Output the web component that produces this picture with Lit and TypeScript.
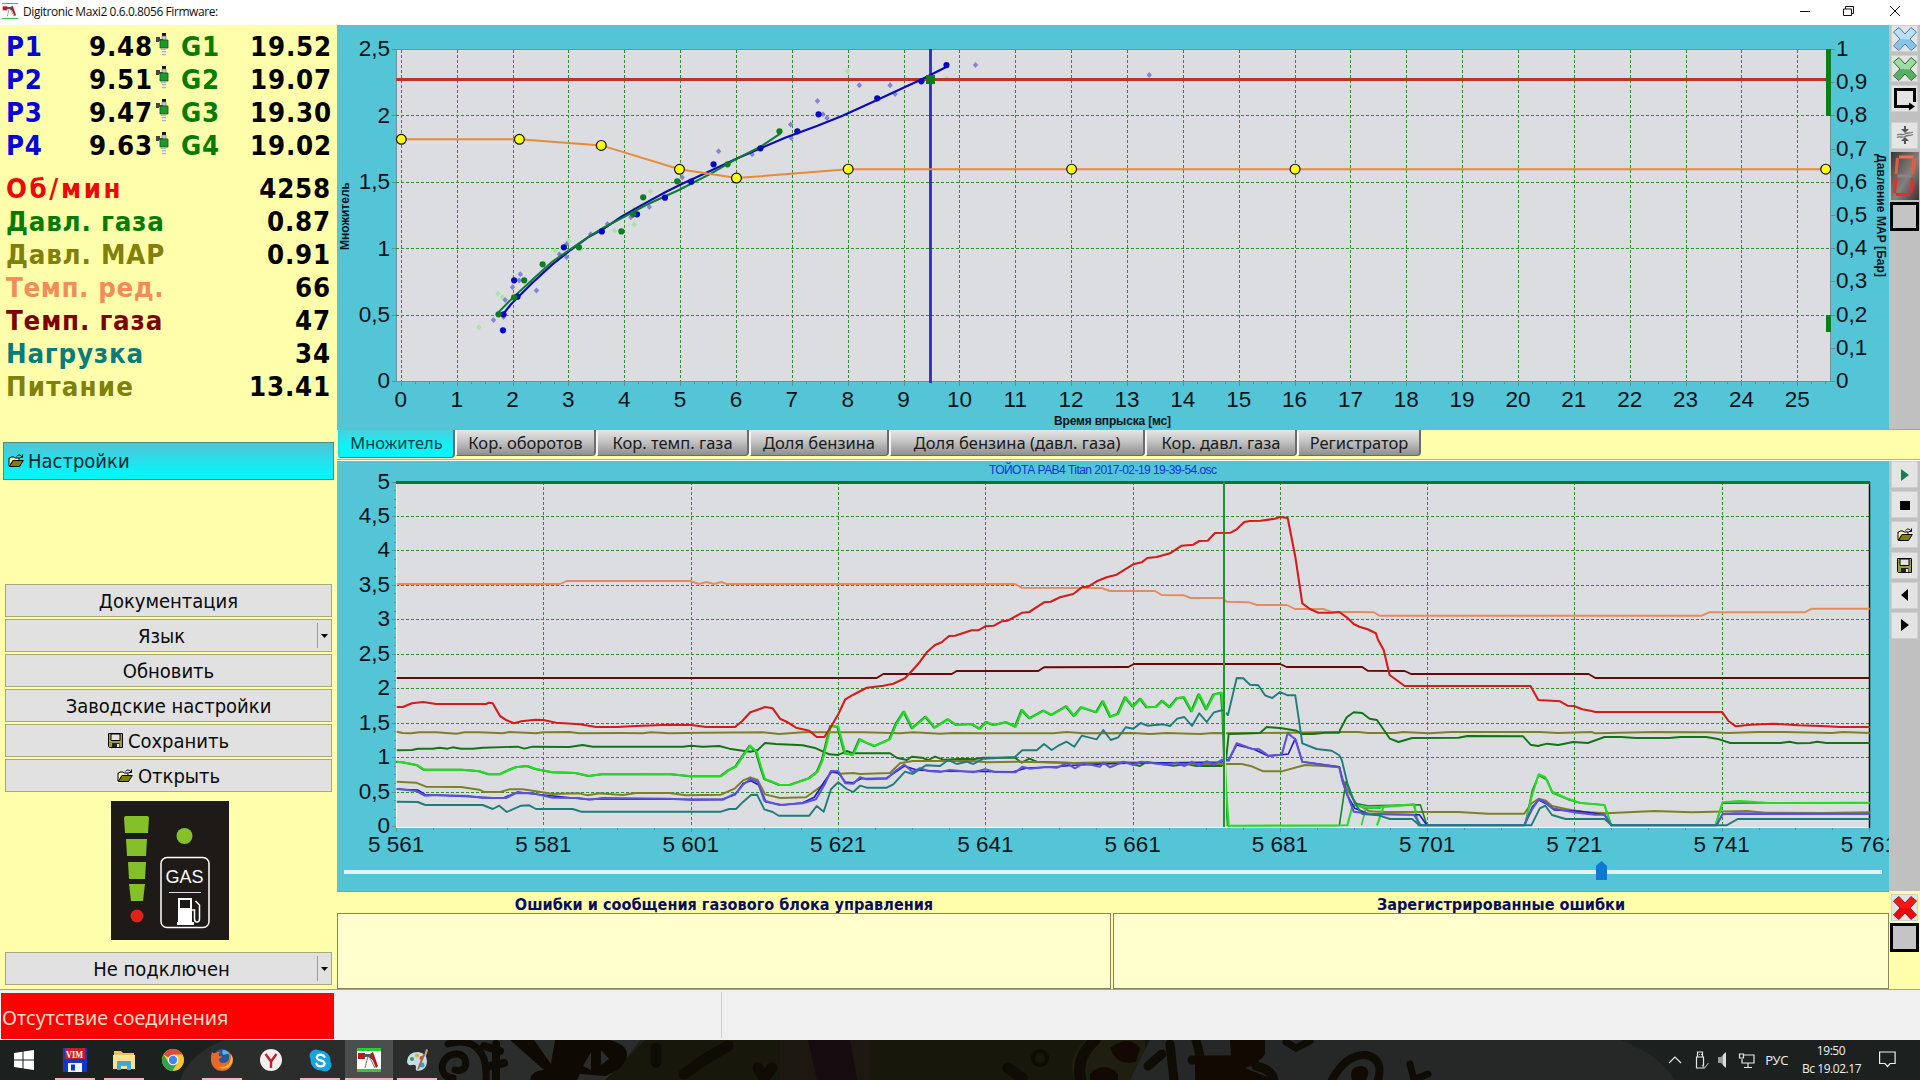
import { LitElement, html, svg, css, nothing } from "lit";
import { customElement, property } from "lit/decorators.js";
import { classMap } from "lit/directives/class-map.js";

type Point = [number, number];

const range = (from: number, to: number, step = 1) =>
  Array.from({ length: Math.round((to - from) / step) + 1 }, (_, i) => from + i * step);

const comma = (n: number) => String(Math.round(n * 10) / 10).replace(".", ",");

/* ---------- icons ---------- */

const folderIcon = html`<svg width="16" height="14" viewBox="0 0 16 14">
  <path d="M1 12V4h1l1-1h3l1 1h4v2.5H5L1.5 12z" fill="#ffff9c" stroke="#000" stroke-width="1" />
  <path d="M1.5 12.5 5 6.5h10.3l-3.8 6z" fill="#808000" stroke="#000" stroke-width="1" />
  <path d="M8.500 2.500C10 .5 12.500 .5 14 3M14.500 .5v3h-3" fill="none" stroke="#000" stroke-width="1" />
</svg>`;

const floppyIcon = html`<svg width="15" height="15" viewBox="0 0 15 15">
  <path d="M.5.500h14v14h-13l-1-1z" fill="#9c9c4a" stroke="#000" />
  <path d="M3 1h9v6.500H3z" fill="#e4e4dc" stroke="#000" />
  <path d="M4 10h7.500v4.500H4z" fill="#222" />
  <path d="M9 11h2v3H9z" fill="#e4e4dc" />
</svg>`;

const injectorIcon = html`<svg width="13" height="23" viewBox="0 0 13 23">
  <path d="M6 0h4v3H6z" fill="#111" />
  <path d="M6 3h4v4H6z" fill="#c8c8c8" stroke="#777" stroke-width=".6" />
  <path d="M0 4h4v2h3v2H3v1H0z" fill="#444" />
  <path d="M4 7h8v8H4z" fill="#1a9a2c" stroke="#0d5a18" stroke-width=".8" />
  <path d="M5 15.500h5v1.500H5zM6 18h4v1.500H6zM6 21h4v1.200H6z" fill="#aab4b8" />
  <path d="M6 17h4v1H6zM6.500 19.500h3V21h-3z" fill="#eee" />
</svg>`;

const crossIcon = (fill: string, shade: string, edge: string) => html`<svg
  width="26"
  height="26"
  viewBox="0 0 26 26">
  <path
    d="M1.500 6 7 1.500 13 8l6-6.500L24.500 6 18 13l6.500 7-5.500 4.500-6-6.500-6 6.500L1.500 20 8 13z"
    fill="${fill}"
    stroke="${edge}" />
  <path d="M8 13 2.500 20 7 24l6-6.500 6 6.500 5-4-6-6.500z" fill="${shade}" opacity=".6" />
</svg>`;

const cycleIcon = html`<svg width="26" height="26" viewBox="0 0 26 26">
  <path d="M22.500 16V3.500h-19v17H18" fill="none" stroke="#000" stroke-width="3" />
  <path d="M17 16.500 23 20.500l-6 4z" fill="#000" />
</svg>`;

const squeezeIcon = html`<svg width="20" height="20" viewBox="0 0 20 20">
  <path d="M10 1v4M10 19v-4" stroke="#555" stroke-width="2" />
  <path d="M6 4h8l-4 4zM6 16h8l-4-4z" fill="#555" />
  <path
    d="M2 10c3-2 5 1 8-1s4 0 8-2M2 12.500c3-2 5 1 8-1s4 0 8-2"
    fill="none"
    stroke="#777"
    stroke-width="1.300" />
</svg>`;

const digitIcon = html`<svg width="28" height="48" viewBox="0 0 28 48">
  <defs>
    <linearGradient id="d" x1="0" y1="0" x2="1" y2="1">
      <stop offset="0" stop-color="#3c3433" />
      <stop offset=".55" stop-color="#85807e" />
      <stop offset="1" stop-color="#3a3231" />
    </linearGradient>
  </defs>
  <path d="M0 0h28v48H0z" fill="url(#d)" />
  <g fill="none" stroke-width="3">
    <path d="M8 5h14.500" stroke="#f0704c" />
    <path d="M6.500 6 5 22M23 6l-1.500 16" stroke="#e85a3e" />
    <path d="M6.500 24h14" stroke="#8e8583" />
    <path d="M5 26 3.500 41M21.500 26 20 41" stroke="#e0302a" />
    <path d="M5 42.500h14" stroke="#ee2a22" />
  </g>
</svg>`;

const glyph = (d: string, fill = "#000") => html`<svg width="10" height="12" viewBox="0 0 10 12">
  <path d="${d}" fill="${fill}" />
</svg>`;

const logoIcon = (size: number, bars: boolean) => html`<svg
  width="${size}"
  height="${size}"
  viewBox="0 0 24 24">
  <path d="M0 0h24v24H0z" fill="#fff" />
  <path d="M0 0h24v${bars ? 3 : 1.5}H0zM0 ${bars ? 21 : 22.5}h24V24H0z" fill="#2ccc34" />
  <path d="M1 5h7v6H1z" fill="#c01818" />
  <path d="M7 6h6l5 4-2 2-5-3H7z" fill="#555" />
  <path d="m13 6 3-2 5 14-2 2z" fill="#b81818" />
  <path d="m11 8-3 12M13 10l5 10" stroke="#777" stroke-width="1" />
</svg>`;

/* ---------- multiplier chart data ---------- */

const TX = (v: number) => 64.3 + v * 55.86;
const TY = (v: number) => 356.5 - v * 132.8;

const petrolCurve: Point[] = [
  [1.83, 0.51], [1.96, 0.58], [2.08, 0.63], [2.34, 0.74], [2.7, 0.88], [3.03, 0.99], [3.36, 1.09],
  [3.62, 1.15], [3.94, 1.24], [4.31, 1.33], [4.75, 1.43], [5.04, 1.49], [5.48, 1.575], [5.99, 1.675],
  [6.43, 1.756], [6.87, 1.836], [7.45, 1.926], [7.89, 2.0], [8.47, 2.11], [8.98, 2.21], [9.31, 2.275],
  [9.79, 2.376],
];

const gasCurve: Point[] = [
  [1.72, 0.513], [1.97, 0.62], [2.34, 0.764], [2.7, 0.902], [3.07, 1.008], [3.36, 1.09], [3.62, 1.158],
  [3.94, 1.229], [4.38, 1.329], [4.97, 1.442], [5.55, 1.567], [5.99, 1.675], [6.43, 1.768], [6.79, 1.869],
];

const petrolDots: Point[] = [
  [1.82, 0.385], [1.83, 0.506], [2.02, 0.762], [2.08, 0.639], [2.91, 1.01], [3.59, 1.13], [4.22, 1.259],
  [4.72, 1.384], [5.19, 1.505], [5.59, 1.635], [6.43, 1.756], [7.09, 1.884], [7.47, 2.012], [8.52, 2.132],
  [9.31, 2.26], [9.76, 2.383],
];

const gasDots: Point[] = [
  [1.74, 0.506], [2.02, 0.634], [2.2, 0.762], [2.53, 0.882], [3.18, 1.01], [3.94, 1.13], [4.15, 1.259],
  [4.33, 1.387], [4.94, 1.507], [5.84, 1.635], [6.77, 1.884],
];

const petrolFaint: Point[] = [
  [1.65, 0.463], [1.83, 0.485], [1.86, 0.614], [1.99, 0.709], [2.13, 0.807], [2.11, 0.76], [2.42, 0.686],
  [2.83, 0.958], [2.96, 0.935], [2.96, 1.035], [3.39, 1.108], [3.69, 1.186], [4.11, 1.236], [4.44, 1.314],
  [5.03, 1.537], [5.68, 1.733], [6.28, 1.711], [6.98, 1.834], [6.97, 1.936], [7.45, 2.112], [7.55, 2.012],
  [7.62, 1.984], [8.2, 2.23], [8.75, 2.23], [8.84, 2.165], [10.28, 2.383], [13.39, 2.308],
];

const gasFaint: Point[] = [
  [1.39, 0.408], [1.81, 0.634], [1.73, 0.66], [2.75, 0.985], [3.0, 1.058], [3.21, 1.0], [3.82, 1.136],
  [4.17, 1.183], [4.17, 1.3], [4.46, 1.432], [5.95, 1.66], [7.99, 2.336], [9.76, 2.283],
];

const multiplier: Point[] = [
  [0, 1.824], [2.114, 1.824], [3.58, 1.778], [4.98, 1.598], [6, 1.532], [8, 1.599], [12, 1.599],
  [16, 1.599], [25.5, 1.599],
];

const toPoints = (points: Point[]) =>
  points.map(([x, y]) => `${TX(x).toFixed(1)},${TY(y).toFixed(1)}`).join(" ");

@customElement("multiplier-chart")
export class MultiplierChart extends LitElement {
  static styles = css`
    :host {
      display: block;
      background: #54c5d6;
    }

    svg {
      display: block;
    }

    text {
      font-family: "Liberation Sans", Arial, sans-serif;
      font-size: 22.5px;
      fill: #06141a;
    }

    .title {
      font-size: 12px;
      font-weight: bold;
    }

    .grid {
      stroke: #2f8f2f;
      stroke-dasharray: 3 2;
      shape-rendering: crispEdges;
    }

    .tick {
      stroke: #5f8f93;
      shape-rendering: crispEdges;
    }
  `;

  render() {
    return html`<svg width="1552" height="404" viewBox="0 0 1552 404">
      <rect x="59.5" y="24.5" width="1434" height="332" fill="#dcdde1" stroke="#6f9294" />
      ${range(0, 25).map((v) => svg`<line class="grid" x1=${TX(v)} x2=${TX(v)} y1="25" y2="356" />`)}
      ${[0.5, 1, 1.5, 2].map((v) => svg`<line class="grid" x1="59" x2="1493" y1=${TY(v)} y2=${TY(v)} />`)}
      ${range(0, 25.5, 0.25).map(
        (v) => svg`<line class="tick" x1=${TX(v)} x2=${TX(v)} y1="357" y2=${v % 1 ? 359 : 361} />`
      )}
      ${range(0, 2.5, 0.5).map((v) => svg`<line class="tick" x1="55" x2="59" y1=${TY(v)} y2=${TY(v)} />`)}
      ${range(0, 10).map(
        (v) => svg`<line class="tick" x1="1494" x2="1498" y1=${TY(v / 4)} y2=${TY(v / 4)} />`
      )}
      <path d="M1489 24h5v67h-5zM1489 290h5v17h-5z" fill="#0a7f1c" />

      ${gasFaint.map(([x, y]) => this.diamond(x, y, "#a4e6a4"))}
      ${petrolFaint.map(([x, y]) => this.diamond(x, y, "#8484d6"))}
      <path d="M59 54.500H1489" stroke="#c2302c" stroke-width="3" />
      <path d="M593.500 24V358" stroke="#2c2cc4" stroke-width="2.800" />
      <polyline points=${toPoints(petrolCurve)} fill="none" stroke="#0c0cb0" stroke-width="2.200" />
      <polyline points=${toPoints(gasCurve)} fill="none" stroke="#107c38" stroke-width="2" />
      ${petrolDots.map(([x, y]) => svg`<circle cx=${TX(x)} cy=${TY(y)} r="3.100" fill="#0808c0" />`)}
      ${gasDots.map(([x, y]) => svg`<circle cx=${TX(x)} cy=${TY(y)} r="3.100" fill="#0c7d20" />`)}
      <path d="M589 50h9v9h-9z" fill="#087f10" />
      <polyline points=${toPoints(multiplier)} fill="none" stroke="#e68c38" stroke-width="2" />
      ${multiplier.map(
        ([x, y]) =>
          svg`<circle cx=${TX(x)} cy=${TY(y)} r="4.900" fill="#ffff10" stroke="#111" stroke-width="1.200" />`
      )}

      ${range(0, 2.5, 0.5).map(
        (v) => svg`<text x="53" y=${TY(v) + 6.8} text-anchor="end">${comma(v)}</text>`
      )}
      ${range(0, 10).map((v) => svg`<text x="1499" y=${TY(v / 4) + 6.5}>${comma(v / 10)}</text>`)}
      ${range(0, 25).map((v) => svg`<text x=${TX(v) - 0.5} y="381.700" text-anchor="middle">${v}</text>`)}
      <text class="title" x="717" y="399.500" textLength="117">Время впрыска [мс]</text>
      <text class="title" transform="translate(12 225) rotate(-90)" textLength="68">Множитель</text>
      <text class="title" transform="translate(1540 129) rotate(90)" textLength="123">Давление MAP [Бар]</text>
    </svg>`;
  }

  diamond(x: number, y: number, fill: string) {
    return svg`<path transform="translate(${TX(x)} ${TY(y)})" d="M0-3 2.700 0 0 3-2.700 0z" fill=${fill} />`;
  }
}

/* ---------- oscilloscope ---------- */

// The log comes in three pages, each with its own origin and resolution.
const PAGES = [
  { x: -1, y: -1, sx: 3, sy: 3 },
  { x: 503, y: -1, sx: 3, sy: 3 },
  { x: 1003, y: 179, sx: 2.703, sy: 3 },
];

interface Trace {
  color: string;
  width?: number;
  shift?: number;
  pages: string[];
}

const tracePoints = ({ pages, shift = 0 }: Trace) =>
  pages
    .map((page, i) => {
      const { x, y, sx, sy } = PAGES[i];
      return page
        .split(" ")
        .filter(Boolean)
        .map((pair) => {
          const [px, py] = pair.split(",").map(Number);
          return `${(x + shift + px / sx).toFixed(1)},${(y + py / sy).toFixed(1)}`;
        })
        .join(" ");
    })
    .join(" ");

const gasA =
  "182,905 200,907 228,912 245,916 265,929 380,929 432,934 460,943 492,943 520,930 540,922 575,918 600,927 650,937 720,939 760,948 800,943 1000,942 1066,949 1155,949 1180,930 1200,920 1220,890 1243,857 1262,875 1275,920 1287,957 1310,966 1332,975 1365,974 1420,955 1445,935 1460,900 1485,798 1507,800";
const gasB =
  "16,880 40,884 60,838 80,848 105,858 150,838 170,790 193,755 218,805 258,770 285,803 325,778 350,795 395,792 420,806 440,786 462,795 500,787 527,800 547,750 570,775 612,752 635,765 680,739 703,768 725,742 770,757 790,724 812,770 835,762 857,712 880,740 902,716 922,742 950,740 968,722 990,742 1012,715 1033,712 1056,754 1078,703 1100,748 1122,704 1145,698 1150,760 1158,980 1166,1097";

const traces: Trace[] = [
  {
    color: "#7f7f28",
    pages: [
      "182,815 200,819 225,820 250,817 300,817 362,821 385,817 430,817 500,820 520,816 600,820 622,817 700,816 730,820 860,819 920,820 945,817 1000,820 1100,818 1280,817 1330,822 1400,817",
      "0,817 70,817 180,820 220,817 300,821 340,819 436,820 640,820 680,816 730,820 880,819 930,822 980,819 1080,822 1120,819 1200,820 1450,817",
      "0,276 50,276 75,279 150,279 170,276 240,280 300,276 540,276 590,279 680,276 690,280 850,276 1000,277 1050,279 1130,276 1200,276 1330,279 1360,276 1432,279",
    ],
  },
  {
    color: "#e88a60",
    pages: [
      "182,372 672,372 692,363 1062,363 1090,372 1112,366 1134,372 1156,366 1172,372",
      "525,372 545,383 785,384 810,393 945,393 965,405 1032,406 1052,414 1148,414 1160,425 1228,427 1250,435 1340,435 1365,447 1450,447 1475,456",
      "40,-84 92,-83 107,-73 978,-73 998,-83 1257,-83 1275,-94 1432,-94",
    ],
  },
  {
    color: "#6a0808",
    pages: [
      "182,654",
      "110,654 130,642 335,642 350,633 595,633 612,622 865,621 882,612 1320,612 1340,621",
      "60,81 75,92 175,93 192,102 672,102 690,114 1432,114",
    ],
  },
  {
    color: "#127418",
    pages: [
      "182,871 228,870 245,866 290,866 310,863 335,866 350,862 375,866 410,866 440,863 545,860 565,866 590,860 700,861 740,855 770,860 1040,860 1066,857 1100,860 1150,858 1180,866 1220,872 1243,875 1265,870 1287,849 1320,852 1400,856 1440,865 1480,883 1507,885",
      "20,873 40,880 150,880 170,893 200,900 215,890 245,893 265,900 285,890 310,899 370,896 400,898 430,893 525,893 545,908 568,896 590,905 700,909 860,908 900,918 920,906 1000,917 1040,912 1070,918 1145,918 1158,900 1166,822 1260,819 1280,801 1325,805 1370,812 1385,822 1420,822 1455,818 1498,818",
      "0,270 18,232 37,217 60,219 80,236 100,240 120,272 135,296 158,306 195,294 320,293 345,288 495,289 515,314 535,318 560,311 590,315 630,306 670,309 715,291 760,291 800,294 890,294 920,291 990,291 1025,298 1055,309 1190,309 1215,305 1235,310 1270,309 1290,305 1315,309 1432,309",
    ],
  },
  {
    color: "#7f7f28",
    pages: [
      "182,965 240,968 270,980 375,981 430,989 445,996 492,996 520,988 560,988 610,995 650,1002 730,1000 755,1006 790,1000 860,1005 900,999 1000,999 1050,1006 1155,1004 1197,985 1220,962 1243,952 1265,960 1287,1003 1332,1014 1410,1012 1440,990 1460,975 1485,935",
      "0,941 40,939 60,942 150,939 180,910 218,903 400,903 440,907 540,905 700,909 850,907 1000,910 1100,912 1205,912 1235,919 1270,934 1325,934 1395,915 1450,918 1498,922",
      "8,420 20,450 45,492 80,514 120,516 320,516 400,521 498,521 518,490 537,476 555,481 573,498 610,507 655,516 720,520 850,513 950,517 1100,513 1150,518 1300,519 1432,517",
    ],
  },
  {
    color: "#1c8c28",
    shift: -1,
    pages: [gasA, gasB],
  },
  {
    color: "#1c8428",
    width: 1.6,
    pages: [
      "",
      "",
      "-2,557 16,425 40,490 75,497 217,494 235,556 500,556 520,450 537,406 560,420 575,459 620,480 650,489 715,495 733,556 1015,556 1034,490 1200,488 1432,488",
    ],
  },
  {
    color: "#24dc24",
    width: 2.1,
    pages: [gasA, gasB, "20,556 34,495 75,503 115,500 200,494 213,556"],
  },
  { color: "#30c830", width: 1.5, pages: ["", "", "58,556 70,505 110,505"] },
  {
    color: "#24dc24",
    width: 2.1,
    pages: ["", "", "100,556 118,500 200,493 212,556 500,556 518,470 537,403 555,412 573,455 610,474 650,489 715,495 733,556 1015,556 1034,487 1080,483 1160,489 1432,488"],
  },
  {
    color: "#2418c4",
    width: 1.6,
    pages: [
      "182,988 245,990 268,1004 440,1012 500,1015 545,996 600,1003 740,1017 1066,1018 1160,1017 1197,1004 1222,970 1245,962 1268,975 1290,1026 1340,1035 1400,1028 1435,1012 1465,965 1487,935 1507,938",
      "16,966 40,968 62,956 140,954 193,918 230,930 300,934 520,935 560,924 650,920 700,916 790,912 860,910 1145,906 1166,898 1190,855 1240,867 1285,888 1325,884 1345,882 1366,836 1387,905 1498,920",
      "8,430 22,470 40,505 80,523 215,524 235,556 498,556 520,500 537,480 560,493 580,510 650,514 715,524 733,556 1018,556 1034,522 1432,521",
    ],
  },
  {
    color: "#5c54d8",
    width: 2.1,
    pages: [
      "182,986 240,993 268,1007 300,1005 400,1008 440,1014 510,1014 540,999 590,1000 650,1013 730,1014 760,1019 800,1014 1000,1016 1066,1020 1160,1019 1200,1000 1220,975 1243,957 1265,965 1285,1022 1330,1035 1400,1030 1440,1018 1465,975 1485,933 1507,934",
      "16,970 40,971 60,952 80,958 140,956 170,930 193,914 218,936 240,925 265,933 300,936 330,930 400,937 436,928 465,936 527,937 547,920 570,926 620,921 650,923 680,910 705,925 730,910 780,920 790,908 810,922 850,905 880,915 902,905 980,914 1010,908 1033,918 1056,905 1078,918 1100,904 1122,914 1145,900 1166,902 1190,850 1235,866 1258,868 1285,887 1325,884 1343,820 1366,838 1387,905 1450,915 1498,922",
      "6,420 18,460 37,515 80,521 200,524 218,556 498,556 518,510 537,478 555,486 573,505 640,518 690,524 715,524 733,556 1018,556 1034,523 1070,520 1432,521",
    ],
  },
  {
    color: "#207c7c",
    pages: [
      "182,1025 245,1026 268,1035 440,1035 470,1047 490,1037 512,1056 555,1037 580,1036 600,1047 710,1047 735,1055 1155,1055 1180,1047 1200,1047 1222,1025 1245,1005 1263,1004 1285,1048 1310,1056 1328,1067 1420,1067 1442,1038 1463,1055 1485,988 1507,967",
      "20,987 40,996 60,977 80,983 140,983 160,973 195,935 218,942 258,916 300,918 325,900 350,912 380,905 400,912 430,896 525,891 547,871 590,871 612,852 635,870 655,857 680,845 703,860 725,827 770,838 790,810 812,840 835,832 857,802 880,806 902,789 922,797 970,793 990,798 1012,776 1033,771 1056,798 1078,760 1100,786 1122,757 1148,750 1164,765 1190,654 1210,655 1230,674 1255,676 1275,706 1297,714 1320,696 1343,706 1366,706 1387,850 1430,867 1475,872 1498,886",
      "5,360 20,430 40,490 60,522 105,526 135,537 195,537 215,556 517,556 540,505 555,497 573,525 610,537 715,537 735,556 1045,556 1075,537 1432,537",
    ],
  },
  {
    color: "#d41c1c",
    width: 2.1,
    pages: [
      "182,741 200,741 228,730 262,726 300,732 450,732 458,728 470,730 492,768 512,781 534,790 556,784 598,779 622,780 660,788 732,793 780,801 845,801 900,798 1000,794 1066,795 1110,801 1197,801 1218,784 1243,757 1265,749 1287,741 1310,745 1332,776 1355,787 1380,803 1420,812 1442,831 1465,831 1485,800 1507,763",
      "16,718 40,704 80,683 130,677 160,671 195,655 218,630 240,605 262,575 285,555 305,547 327,528 345,527 395,511 415,511 436,499 462,497 485,484 503,482 547,458 568,456 612,427 632,425 660,412 700,402 727,381 745,380 770,364 800,352 830,344 860,325 880,313 905,307 922,294 950,291 990,280 1025,257 1060,254 1078,243 1103,242 1125,219 1172,218 1190,208 1213,186 1230,183 1262,182 1305,176 1320,171 1343,174 1366,290 1387,430 1410,447 1435,458 1475,458 1498,456 1520,472 1541,492 1558,500",
      "75,-32 97,-20 103,0 118,30 134,105 175,138 515,138 536,180 595,184 615,197 632,198 655,208 680,213 690,216 1033,216 1050,243 1070,259 1110,254 1170,251 1240,256 1300,258 1350,261 1432,261",
    ],
  },
];

@customElement("osc-chart")
export class OscChart extends LitElement {
  static styles = css`
    :host {
      display: block;
      background: #54c5d6;
    }

    svg {
      display: block;
    }

    text {
      font-family: "Liberation Sans", Arial, sans-serif;
      font-size: 22.5px;
      fill: #06141a;
    }

    .name {
      font-size: 12px;
      fill: #0a34dc;
    }

    .grid {
      stroke: #2f8f2f;
      stroke-dasharray: 3 2;
      shape-rendering: crispEdges;
    }

    .tick {
      stroke: #5f8f93;
      shape-rendering: crispEdges;
    }
  `;

  render() {
    const x = (v: number) => 59.7 + (v - 5561) * 7.364;
    const y = (v: number) => 365.5 - v * 68.9;

    return html`<svg width="1552" height="430" viewBox="0 0 1552 430">
      <rect x="59" y="21" width="1474" height="345" fill="#dcdde1" />
      ${range(5581, 5741, 20).map((v) => svg`<line class="grid" x1=${x(v)} x2=${x(v)} y1="21" y2="366" />`)}
      ${range(0.5, 4.5, 0.5).map((v) => svg`<line class="grid" x1="59" x2="1533" y1=${y(v)} y2=${y(v)} />`)}
      ${range(5561, 5761, 5).map(
        (v) => svg`<line class="tick" x1=${x(v)} x2=${x(v)} y1="367" y2=${(v - 1) % 20 ? 369 : 371} />`
      )}
      ${range(0, 5, 0.125).map(
        (v) => svg`<line class="tick" x1=${v % 0.5 ? 57 : 55} x2="59" y1=${y(v)} y2=${y(v)} />`
      )}
      <path d="M59.500 21V366.500H1533" fill="none" stroke="#f4fafb" />
      <path d="M1532.500 21V367" stroke="#111" stroke-width="1.500" />
      <path d="M59 21.500H1533" stroke="#0c7a24" stroke-width="3" />
      <path d="M887 365H1003" stroke="#6fe06f" stroke-width="1.500" />
      ${traces.map(
        (t) => svg`<polyline points=${tracePoints(t)} fill="none" stroke=${t.color}
          stroke-width=${t.width ?? 1.9} stroke-linejoin="round" />`
      )}
      <path d="M887 20V366" stroke="#259030" stroke-width="2" />
      <path d="M888.500 250V366" stroke="#b8f4b8" />

      ${range(0, 5, 0.5).map((v) => svg`<text x="53" y=${y(v) + 6.5} text-anchor="end">${comma(v)}</text>`)}
      ${range(5561, 5761, 20).map(
        (v) => svg`<text x=${x(v) - 0.5} y="391" text-anchor="middle">5 ${v - 5000}</text>`
      )}
      <text class="name" x="652" y="13" textLength="228">ТОЙОТА РАВ4 Titan 2017-02-19 19-39-54.osc</text>
      <path d="M7 409h1538v4H7z" fill="#dcf4f7" />
      <path d="M1259 405l5.500-5 5.500 5v14h-11z" fill="#0f78d4" />
    </svg>`;
  }
}

/* ---------- sidebar ---------- */

const injectors = [
  ["1", "9.48", "19.52"],
  ["2", "9.51", "19.07"],
  ["3", "9.47", "19.30"],
  ["4", "9.63", "19.02"],
];

const readings = [
  { label: "Об/мин", value: "4258", kind: "rpm" },
  { label: "Давл. газа", value: "0.87", kind: "gas" },
  { label: "Давл. МАР", value: "0.91", kind: "map" },
  { label: "Темп. ред.", value: "66", kind: "reducer" },
  { label: "Темп. газа", value: "47", kind: "heat" },
  { label: "Нагрузка", value: "34", kind: "load" },
  { label: "Питание", value: "13.41", kind: "supply" },
];

@customElement("side-panel")
export class SidePanel extends LitElement {
  static styles = css`
    :host {
      box-sizing: border-box;
      display: flex;
      flex-direction: column;
      background: #ffffab;
      padding: 5px 5px 4px 5px;
    }

    .readings {
      font: bold 27.4px/33px "DejaVu Sans Condensed", "DejaVu Sans", sans-serif;
      font-stretch: condensed;
      letter-spacing: 0.8px;
      padding: 0 0 0 1px;
    }

    .injector {
      display: grid;
      grid-template-columns: 50px 97px 28px 60px 1fr;
      height: 33px;
    }

    .injector svg {
      margin: 3px 0 0 3px;
    }

    .num {
      text-align: right;
    }

    .reading {
      display: flex;
      justify-content: space-between;
      height: 33px;
      padding-right: 1px;
    }

    .block {
      margin-top: 10px;
    }

    .p { color: #0404d8; }
    .g, .gas { color: #047c04; }
    .rpm { color: #ee0808; letter-spacing: 2.6px; }
    .map { color: #80800c; }
    .reducer { color: #f28c58; letter-spacing: 0.6px; }
    .heat { color: #7a0404; }
    .load { color: #087c7c; }
    .supply { color: #80800c; letter-spacing: 1.2px; }

    .settings {
      box-sizing: border-box;
      display: flex;
      align-items: center;
      gap: 4px;
      width: 331px;
      height: 38px;
      margin: 39px 0 104px -2px;
      padding: 0 4px;
      border: 1px solid #4b8c8c;
      background: linear-gradient(#50c4d6, #08f4fa 85%);
      font: 20px "DejaVu Sans Condensed", "DejaVu Sans", sans-serif;
      font-stretch: condensed;
      color: #102830;
    }

    .button {
      box-sizing: border-box;
      display: flex;
      align-items: stretch;
      height: 33px;
      margin-bottom: 2px;
      border: 1px solid #a9a97c;
      background: #e1e1e1;
      font: 20px/32px "DejaVu Sans Condensed", "DejaVu Sans", sans-serif;
      font-stretch: condensed;
      color: #0a0a0a;
    }

    .label {
      display: flex;
      flex: 1;
      align-items: center;
      justify-content: center;
      gap: 5px;
    }

    .arrow {
      display: flex;
      align-items: center;
      justify-content: center;
      width: 13px;
      margin: 3px 0;
      border-left: 1px solid #9a9a9a;
    }

    .gauge {
      align-self: center;
      margin: 7px 0 12px 3px;
    }

    .gauge text {
      font: 18px "Liberation Sans", Arial, sans-serif;
      fill: #fff;
    }
  `;

  button(label: string, icon: unknown = nothing, menu = false) {
    return html`<div class="button">
      <span class="label">${icon}<span>${label}</span></span>
      ${menu
        ? html`<span class="arrow"><svg width="7" height="4"><path d="M0 0h7L3.500 4z" /></svg></span>`
        : nothing}
    </div>`;
  }

  render() {
    return html`
      <div class="readings">
        ${injectors.map(
          ([n, petrol, gas]) => html`<div class="injector">
            <span class="p">P${n}</span><span class="num">${petrol}</span>${injectorIcon}
            <span class="g">G${n}</span><span class="num">${gas}</span>
          </div>`
        )}
        <div class="block">
          ${readings.map(
            (r) => html`<div class="reading"><span class=${r.kind}>${r.label}</span><span>${r.value}</span></div>`
          )}
        </div>
      </div>
      <div class="settings">${folderIcon}<span>Настройки</span></div>
      ${this.button("Документация")} ${this.button("Язык", nothing, true)} ${this.button("Обновить")}
      ${this.button("Заводские настройки")} ${this.button("Сохранить", floppyIcon)}
      ${this.button("Открыть", folderIcon)} ${this.renderGauge()}
      ${this.button("Не подключен", nothing, true)}
    `;
  }

  renderGauge() {
    return html`<svg class="gauge" width="118" height="139" viewBox="0 0 118 139">
      <path d="M0 0h118v139H0z" fill="#1e1a17" />
      <path
        d="M13 17q0-2 2-2h21q2 0 2 2l-1 15H14zM15 38h21l-1 17H16zM17 61h18l-1 17H18zM18 83h16l-2 17H20z"
        fill="#84c02a" />
      <circle cx="73.500" cy="35" r="8" fill="#84c02a" />
      <circle cx="26" cy="115" r="6.500" fill="#dc2418" />
      <rect x="50" y="56.500" width="48" height="70" rx="6" fill="none" stroke="#fff" stroke-width="1.500" />
      <text x="54.500" y="82" textLength="38">GAS</text>
      <path d="M58 91.500h32" stroke="#ddd" />
      <path d="M67 97h14v24h2v3H66v-3h1zM69 99v8h10v-8z" fill="#fff" fill-rule="evenodd" />
      <path
        d="M81 109h2.500v9q0 3 2.500 3t2.500-3v-14l-4-4"
        fill="none"
        stroke="#fff"
        stroke-width="1.500" />
    </svg>`;
  }
}

/* ---------- taskbar ---------- */

const taskIcons = {
  start: html`<svg width="20" height="20" viewBox="0 0 20 20">
    <path d="M0 3l8.500-1.200V9.500H0zM9.500 1.600 20 0v9.500H9.500zM0 10.500h8.500v7.700L0 17zM9.500 10.500H20V20L9.500 18.400z" fill="#fff" />
  </svg>`,
  vim: html`<svg width="24" height="24" viewBox="0 0 24 24">
    <path d="M0 0h24v24H0z" fill="#1038c8" />
    <path d="M2 0h20v11H2z" fill="#c81c28" />
    <text x="3" y="9.500" font-family="Liberation Serif, serif" font-weight="bold" font-size="9.500" textLength="17" lengthAdjust="spacingAndGlyphs" fill="#fff">VIM</text>
    <path d="M5 15h14v9H5z" fill="#f4f6ff" />
    <path d="M8 16.500h4v6H8z" fill="#1038c8" />
  </svg>`,
  files: html`<svg width="22" height="20" viewBox="0 0 22 20">
    <path d="M1 1h7l2 2h11v16H1z" fill="#e9c559" />
    <path d="M0 5h22v14H0z" fill="#fae392" />
    <path d="M4 20v-8q0-1 1-1h12q1 0 1 1v8h-4v-4H8v4z" fill="#3fa8d8" />
  </svg>`,
  chrome: html`<svg width="22" height="22" viewBox="0 0 22 22">
    <circle cx="11" cy="11" r="11" fill="#f4c832" />
    <path d="M11 11 1.500 5.500A11 11 0 0 1 20.500 5.500H11z" fill="#dd4a3c" />
    <path d="M1.500 5.500A11 11 0 0 0 10.500 22L15.500 13.500 11 11 6.300 13.600z" fill="#2ea254" />
    <circle cx="11" cy="11" r="5.200" fill="#fff" />
    <circle cx="11" cy="11" r="4.200" fill="#4484ee" />
  </svg>`,
  firefox: html`<svg width="24" height="24" viewBox="0 0 24 24">
    <circle cx="12.500" cy="11" r="10" fill="#245a9c" />
    <path d="M13 2q5 0 7 5-3-2-6 0-3-2-1-5z" fill="#5cb4e4" />
    <path d="M2 4q2 2 4 1 2-2 4-1-2 2-1 4 3 0 3 1l-3 2q0 4 4 4 5 0 6-4 1-4-1-7 5 3 5 8a11 11 0 0 1-22 0Q.5 8 2 4z" fill="#e8682a" />
    <path d="M21 6q4 7-1 12-5 5-12 1 9 1 12-5 1-4 1-8z" fill="#f8b43c" />
  </svg>`,
  yandex: html`<svg width="22" height="22" viewBox="0 0 22 22">
    <circle cx="11" cy="11" r="11" fill="#f2efee" />
    <path d="m5.500 5 5.500 7.500V19M16.500 5 11 12.500" fill="none" stroke="#c4202c" stroke-width="2.400" />
  </svg>`,
  skype: html`<svg width="23" height="23" viewBox="0 0 23 23">
    <circle cx="7" cy="7" r="6.500" fill="#14a4e0" />
    <circle cx="16" cy="16" r="6.500" fill="#14a4e0" />
    <circle cx="11.500" cy="11.500" r="10" fill="#14a4e0" />
    <path d="M15.500 8Q14.500 5.600 11.500 5.600T7.700 8.300Q7.700 10.500 11.500 11.300T15.600 14.400Q15.400 17.300 11.600 17.300T7.400 14.600" fill="none" stroke="#fff" stroke-width="2.200" stroke-linecap="round" />
  </svg>`,
  logo: logoIcon(24, true),
  paint: html`<svg width="24" height="24" viewBox="0 0 24 24">
    <path d="M2 13Q3 4 13 4q9 1 9 9 0 9-9 10-3 0-2-4 0-3-4-2-5 1-5-4z" fill="#c6dceb" />
    <circle cx="7" cy="11" r="2" fill="#3a9a3a" />
    <circle cx="12" cy="7.500" r="2" fill="#e0b030" />
    <circle cx="16.500" cy="10" r="2" fill="#d04030" />
    <circle cx="17" cy="17" r="2.500" fill="#3c9ad8" />
    <path d="m21 1 2 1-2 6h-2z" fill="#d8a070" />
    <path d="M20 7 14 21l-2 2 1-4 5-13z" fill="#a06a3c" />
  </svg>`,
};

const tasks: { icon: keyof typeof taskIcons; open?: boolean; active?: boolean }[] = [
  { icon: "start" },
  { icon: "vim", open: true },
  { icon: "files", open: true },
  { icon: "chrome" },
  { icon: "firefox", open: true },
  { icon: "yandex" },
  { icon: "skype", open: true },
  { icon: "logo", open: true, active: true },
  { icon: "paint", open: true },
];

@customElement("task-bar")
export class TaskBar extends LitElement {
  static styles = css`
    :host {
      position: relative;
      display: flex;
      height: 40px;
      overflow: hidden;
      background: #1c201f;
      color: #f0f0f0;
      font: 12px "Open Sans", "Noto Sans", sans-serif;
    }

    .wallpaper {
      position: absolute;
      inset: 0;
    }

    .tasks,
    .tray {
      position: relative;
      display: flex;
    }

    .task {
      box-sizing: border-box;
      display: flex;
      align-items: center;
      justify-content: center;
      width: 40px;
      margin-right: 9px;
      padding-top: 2px;
      border-bottom: 2px solid transparent;
    }

    .task:first-child {
      margin-left: 4px;
      margin-right: 11px;
    }

    .open {
      border-color: #f0b4bc;
    }

    .active {
      width: 48px;
      margin: 0 4px 0 -4px;
      background: #4c4e4e;
    }

    .tray {
      align-items: center;
      margin-left: auto;
      padding-right: 24px;
    }

    .lang {
      margin: 0 14px 0 9px;
      font-size: 13px;
      letter-spacing: -0.4px;
    }

    .clock {
      width: 58px;
      margin-right: 19px;
      text-align: center;
      line-height: 18px;
      white-space: nowrap;
      letter-spacing: -0.45px;
    }
  `;

  render() {
    return html`
      ${this.renderWallpaper()}
      <div class="tasks">
        ${tasks.map(
          ({ icon, open = false, active = false }) =>
            html`<div class=${classMap({ task: true, open, active })}>${taskIcons[icon]}</div>`
        )}
      </div>
      <div class="tray">
        <svg width="92" height="22" viewBox="0 0 92 22" fill="none" stroke="#e8e8e8" stroke-width="1.200">
          <path d="m5 14 6-6 6 6" />
          <path d="M32.500 8h7v11h-7zM33.500 8V3h5v5M35 5.500h.8M37 5.500h.8" />
          <path d="m38 16 2.500 3 4-5" stroke="#999" />
          <path d="M54 8h3l4-4v14l-4-4h-3z" fill="#9a9a9a" stroke="none" />
          <path d="M59 6l3-3v16l-3-3z" fill="#ddd" stroke="none" />
          <path d="M80 6h10v8H78v-4M84 14v4M80 18.500h8M75.500 5h4v4h-4z" />
        </svg>
        <span class="lang">РУС</span>
        <div class="clock">19:50<br />Вс 19.02.17</div>
        <svg width="17" height="18" viewBox="0 0 17 18" fill="none" stroke="#f0f0f0" stroke-width="1.200">
          <path d="M.6 1h15.500v11.500h-5L8.500 15.500 6 12.500H.6z" />
        </svg>
      </div>
    `;
  }

  renderWallpaper() {
    return html`<svg class="wallpaper" width="1920" height="40" viewBox="0 0 1920 40">
      <path d="M180 40Q190 12 225 0H640L610 40z" fill="#2b2c2c" />
      <path d="M645 0H1150V40H605z" fill="#17170b" />
      <path d="M780 0h90v40h-90z" fill="#1c1811" />
      <path d="M808 0h42l7 40h-40z" fill="#160b0f" />
      <path d="M1085 0q-20 20-10 40h70V0z" fill="#1e1f0e" />
      <path d="M1150 0h470q40 15 55 40H1130z" fill="#262727" />
      <g fill="none" stroke="#0f0b05" stroke-linecap="round">
        <path d="M455 30c14 4 14-16 2-16-18 0-20 24-4 24M448 4c28-8 40 10 38 36" stroke-width="7" />
        <path d="M484 6l16 5M486 27l18-4M496 4v36" stroke-width="8" />
        <path d="M656 8v14M684 34l20-14 24-14M758 28l6 10 8-10" stroke-width="11" />
        <path d="M1008 28l14 10M1081 40q-6-22 14-40" stroke-width="11" />
        <path d="M1170 4l4 36M1162 14l-14 12M1196 0l6 24M1192 20h60M1256 26q18 4 18 16" stroke-width="9" />
        <path d="M1332 40q14-26 34-25 18 4 12 25" stroke-width="8" />
        <path d="M1286 2l10 6 14-7M1410 24l4 16M1428 34l-10 4" stroke-width="7" />
        <circle cx="1040" cy="18" r="7" stroke-width="4" />
      </g>
      <path
        d="M510 0h24l17 24 4-24h55q28 8 10 28l-14 8-26-2-3 6H530q2-10 14-10z"
        fill="#0e0903" />
      <path d="m583 26 8-14v18zM601 10l8 9-8 6z" fill="#2b2c2c" />
      <path
        d="M1090 34q14-14 28 0v6h-28zM1110 8q18-14 30 0l-4 14q-20 4-26-14zM1230 0h35v14q-8 12-20 14l30 12h-80V16h36z"
        fill="#120903" />
      <path d="M1352 40q-4-14 10-14 10 2 4 14z" fill="#120903" />
    </svg>`;
  }
}

/* ---------- window ---------- */

const tabs = [
  { label: "Множитель", width: 117 },
  { label: "Кор. оборотов", width: 141 },
  { label: "Кор. темп. газа", width: 153 },
  { label: "Доля бензина", width: 140 },
  { label: "Доля бензина (давл. газа)", width: 256 },
  { label: "Кор. давл. газа", width: 152 },
  { label: "Регистратор", width: 124 },
];

@customElement("tool-strip")
export class ToolStrip extends LitElement {
  @property() kind: "map" | "player" | "errors" = "map";

  static styles = css`
    :host {
      box-sizing: border-box;
      display: flex;
      flex-direction: column;
      align-items: center;
      width: 31px;
      background: #c0c0c0;
    }

    :host([kind="errors"]) {
      background: #ffffab;
    }

    .tool {
      box-sizing: border-box;
      display: flex;
      align-items: center;
      justify-content: center;
      width: 27px;
      height: 27px;
      margin-bottom: 3.2px;
      background: #e4e4e4;
      border: 1px solid #cfcfcf;
      overflow: hidden;
    }

    .tool svg {
      flex: none;
    }

    .clear {
      margin: 3px 0 1px;
    }

    .gap {
      height: 6px;
    }

    .frame {
      box-sizing: border-box;
      width: 29px;
      height: 29px;
      margin-top: 1px;
      border: 3px solid #000;
      background: #c4c4c4;
      flex: none;
    }

    .digit {
      height: 49px;
    }
  `;

  tool(icon: unknown) {
    return html`<div class="tool">${icon}</div>`;
  }

  render() {
    if (this.kind === "player") {
      return [
        glyph("M1 0l8 6-8 6z", "#1c7a50"),
        glyph("M0 2h10v9H0z"),
        folderIcon,
        floppyIcon,
        glyph("M8 0 1 6l7 6z"),
        glyph("M1 0l8 6-8 6z"),
      ].map((icon) => this.tool(icon));
    }
    if (this.kind === "errors") {
      return html`<div class="tool clear">${crossIcon("#ff1414", "#e00000", "#7a3030")}</div>
        <div class="frame"></div>`;
    }
    return html`
      ${this.tool(crossIcon("#b8e0f6", "#68b0e0", "#3c7cac"))}
      ${this.tool(crossIcon("#a0dca0", "#2c8c3c", "#246a30"))} ${this.tool(cycleIcon)}
      <div class="gap"></div>
      ${this.tool(squeezeIcon)}
      <div class="digit">${digitIcon}</div>
      <div class="frame"></div>
    `;
  }
}

@customElement("app-root")
export class AppRoot extends LitElement {
  static styles = css`
    :host {
      display: flex;
      flex-direction: column;
      width: 1920px;
      height: 1080px;
      overflow: hidden;
      background: #fff;
      font-family: "Open Sans", "Noto Sans", sans-serif;
    }

    .titlebar {
      display: flex;
      align-items: center;
      height: 25px;
      padding: 0 19px 0 2px;
      box-sizing: border-box;
      font-size: 12px;
      letter-spacing: -0.42px;
      color: #111;
    }

    .titlebar span {
      margin: -3px auto 0 5px;
    }

    .titlebar > svg {
      margin-top: -3px;
    }

    .body {
      display: grid;
      grid-template-columns: 337px 1fr;
      height: 964px;
    }

    .main {
      display: flex;
      flex-direction: column;
    }

    .row {
      display: flex;
    }

    .tabs {
      box-sizing: border-box;
      display: flex;
      align-items: flex-start;
      height: 32px;
      padding-left: 1px;
      background: linear-gradient(#ffffab 29px, #a8b8a0 29px, #a8b8a0 30px, #fff 30px);
      border-top: 1px solid #8ab0a8;
    }

    .tab {
      box-sizing: border-box;
      height: 26px;
      border-right: 2px solid #6c6c6c;
      border-left: 2px solid #f6f6f6;
      border-bottom: 1px solid #6c6c6c;
      border-radius: 0 0 4px 2px;
      background: linear-gradient(#e6e6e6, #c4c4c4 45%, #8f8f8f);
      text-align: center;
      font: 16.5px/26px "Noto Sans", "Open Sans", sans-serif;
      color: #1a1a1a;
      white-space: nowrap;
    }

    .tab.on {
      height: 28px;
      border-left-color: #14e4ec;
      background: linear-gradient(#4cd0dc, #0cf4f8 60%);
      color: #0c4048;
    }

    .errors {
      display: grid;
      grid-template-columns: 774px 776px;
      column-gap: 2px;
      flex: 1;
      height: 98px;
      background: #ffffab;
      box-sizing: border-box;
      border-top: 1px solid #9a9c80;
    }

    .pane {
      display: flex;
      flex-direction: column;
    }

    h2 {
      margin: 0;
      height: 21px;
      text-align: center;
      font: bold 16.1px/25px "DejaVu Sans Condensed", "DejaVu Sans", sans-serif;
      font-stretch: condensed;
      color: #0c0c5c;
    }

    .box {
      box-sizing: border-box;
      flex: 1;
      border: 1px solid #86865e;
      background: #ffffce;
    }

    .status {
      display: flex;
      height: 51px;
      box-sizing: border-box;
      border-top: 1px solid #a4a48c;
      background: #f0f0f0;
    }

    .alarm {
      width: 333px;
      height: 46px;
      margin: 3px 0 0 1px;
      background: #ff0000;
      color: #ffdcc8;
      font: 19.8px/49px "Noto Sans", "Open Sans", sans-serif;
      text-indent: 1px;
      white-space: nowrap;
    }

    .divider {
      width: 387px;
      margin: 2px 0;
      border-right: 1px solid #d0d0d0;
    }
  `;

  render() {
    return html`
      <div class="titlebar">
        ${logoIcon(16, false)}
        <span>Digitronic Maxi2 0.6.0.8056 Firmware:</span>
        <svg width="102" height="12" viewBox="0 0 102 12" fill="none" stroke="#111">
          <path d="M1 6.500h10M44.500 4v6.500h8V4zM46.500 4V1.500h8v7h-2M91 1l10 10M101 1 91 11" />
        </svg>
      </div>
      <div class="body">
        <side-panel></side-panel>
        <div class="main">
          <div class="row"><multiplier-chart></multiplier-chart><tool-strip kind="map"></tool-strip></div>
          <div class="tabs">
            ${tabs.map(
              (t, i) =>
                html`<div class=${classMap({ tab: true, on: i === 0 })} style="width:${t.width}px">${t.label}</div>`
            )}
          </div>
          <div class="row"><osc-chart></osc-chart><tool-strip kind="player"></tool-strip></div>
          <div class="row">
            <div class="errors">
              <div class="pane"><h2>Ошибки и сообщения газового блока управления</h2><div class="box"></div></div>
              <div class="pane"><h2>Зарегистрированные ошибки</h2><div class="box"></div></div>
            </div>
            <tool-strip kind="errors"></tool-strip>
          </div>
        </div>
      </div>
      <div class="status">
        <div class="alarm">Отсутствие соединения</div>
        <div class="divider"></div>
      </div>
      <task-bar></task-bar>
    `;
  }
}
